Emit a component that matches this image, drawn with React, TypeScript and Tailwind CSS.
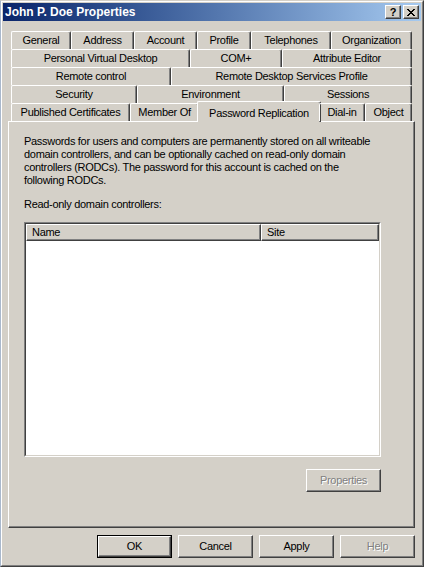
import React from "react";

const font = { fontFamily: '"Liberation Sans", Arial, sans-serif' };

type Tab = { label: string; w: string };

const rows: Tab[][] = [
  [
    { label: "General", w: "w-[60px]" },
    { label: "Address", w: "w-[63px]" },
    { label: "Account", w: "w-[63px]" },
    { label: "Profile", w: "w-[54px]" },
    { label: "Telephones", w: "w-[80px]" },
    { label: "Organization", w: "w-[81px]" },
  ],
  [
    { label: "Personal Virtual Desktop", w: "w-[179px]" },
    { label: "COM+", w: "w-[92px]" },
    { label: "Attribute Editor", w: "w-[130px]" },
  ],
  [
    { label: "Remote control", w: "w-[160px]" },
    { label: "Remote Desktop Services Profile", w: "w-[241px]" },
  ],
  [
    { label: "Security", w: "w-[126px]" },
    { label: "Environment", w: "w-[147px]" },
    { label: "Sessions", w: "w-[128px]" },
  ],
];

function TabItem({ label, w }: Tab) {
  return (
    <div
      className={`${w} h-[18px] shrink-0 flex items-center justify-center border-t border-l border-r border-t-white border-l-white border-r-[#404040] rounded-t-[2px] shadow-[inset_-1px_0_0_#808080] text-[11px] text-black whitespace-nowrap`}
    >
      {label}
    </div>
  );
}

function Button({ children, disabled, isDefault }: { children: React.ReactNode; disabled?: boolean; isDefault?: boolean }) {
  return (
    <div
      className={`w-[75px] h-[23px] flex items-center justify-center text-[11px] bg-[#d4d0c8] ${
        isDefault ? "border border-black" : ""
      }`}
    >
      <div
        className={`w-full h-full flex items-center justify-center border border-t-white border-l-white border-r-[#404040] border-b-[#404040] shadow-[inset_-1px_-1px_0_#808080] ${
          disabled ? "text-[#808080] [text-shadow:1px_1px_0_#ffffff]" : "text-black"
        }`}
      >
        {children}
      </div>
    </div>
  );
}

export default function App() {
  return (
    <div
      style={font}
      className="w-[424px] h-[567px] bg-[#d4d0c8] tracking-[-0.3px] border border-t-[#d4d0c8] border-l-[#a9b8cc] border-r-[#404040] border-b-[#404040] overflow-hidden"
    >
      <div className="w-full h-full border border-t-white border-l-white border-r-[#808080] border-b-[#808080] p-px flex flex-col">
        {/* title bar */}
        <div className="h-[18px] shrink-0 flex items-center justify-between pl-[2px] pr-[2px] bg-gradient-to-r from-[#0a246a] to-[#a6caf0]">
          <span className="text-white font-bold text-[12px] leading-none tracking-normal">John P. Doe Properties</span>
          <div className="flex gap-[2px]">
            <div className="w-[16px] h-[14px] flex items-center justify-center bg-[#d4d0c8] border border-t-white border-l-white border-r-[#404040] border-b-[#404040] shadow-[inset_-1px_-1px_0_#808080] text-[11px] font-bold leading-none">
              ?
            </div>
            <div className="w-[16px] h-[14px] flex items-center justify-center bg-[#d4d0c8] border border-t-white border-l-white border-r-[#404040] border-b-[#404040] shadow-[inset_-1px_-1px_0_#808080]">
              <svg width="8" height="7" viewBox="0 0 8 7">
                <path d="M0 0h2v1h1v1h2v-1h1v-1h2v1h-1v1h-1v1h-1v1h1v1h1v1h1v1h-2v-1h-1v-1h-2v1h-1v1h-2v-1h1v-1h1v-1h1v-1h-1v-1h-1v-1h-1z" fill="black" />
              </svg>
            </div>
          </div>
        </div>

        {/* tabs */}
        <div className="mt-[10px] pl-[5px] flex flex-col">
          <div className="pl-[3px] flex flex-col">
            {rows.map((r, i) => (
              <div key={i} className="flex">
                {r.map((t) => (
                  <TabItem key={t.label} {...t} />
                ))}
              </div>
            ))}
            <div className="flex items-end relative z-10">
              <TabItem label="Published Certificates" w="w-[119px]" />
              <TabItem label="Member Of" w="w-[69px]" />
              <div className="w-[124px] -mx-[2px] h-[21px] -mt-[2px] -mb-px shrink-0 flex items-start pt-[3px] justify-center bg-[#d4d0c8] border-t border-l border-r border-t-white border-l-white border-r-[#404040] rounded-t-[2px] shadow-[inset_-1px_0_0_#808080] text-[11px] whitespace-nowrap">
                Password Replication
              </div>
              <TabItem label="Dial-in" w="w-[46px]" />
              <TabItem label="Object" w="w-[47px]" />
            </div>
          </div>

          {/* panel */}
          <div className="w-[407px] h-[407px] border border-t-white border-l-white border-r-[#404040] border-b-[#404040] shadow-[inset_-1px_-1px_0_#808080] pl-[15px] pt-[13px] flex flex-col text-[11px] text-black">
            <div className="leading-[13px] whitespace-nowrap">
              <div>Passwords for users and computers are permanently stored on all writeable</div>
              <div>domain controllers, and can be optionally cached on read-only domain</div>
              <div>controllers (RODCs). The password for this account is cached on the</div>
              <div>following RODCs.</div>
            </div>
            <div className="mt-[11px] leading-[13px]">Read-only domain controllers:</div>

            <div className="mt-[11px] w-[357px] h-[235px] border border-t-[#808080] border-l-[#808080] border-r-white border-b-white">
              <div className="w-full h-full border border-t-[#404040] border-l-[#404040] border-r-[#d4d0c8] border-b-[#d4d0c8] bg-white flex flex-col">
                <div className="flex h-[17px] shrink-0">
                  <div className="w-[235px] h-full bg-[#d4d0c8] border border-t-white border-l-white border-r-[#404040] border-b-[#404040] shadow-[inset_-1px_-1px_0_#808080] pl-[5px] flex items-center">
                    Name
                  </div>
                  <div className="flex-1 h-full bg-[#d4d0c8] border border-t-white border-l-white border-r-[#404040] border-b-[#404040] shadow-[inset_-1px_-1px_0_#808080] pl-[5px] flex items-center">
                    Site
                  </div>
                </div>
              </div>
            </div>

            <div className="mt-[12px] w-[357px] flex justify-end">
              <Button disabled>Properties</Button>
            </div>
          </div>

          {/* dialog buttons */}
          <div className="mt-[7px] w-[407px] flex justify-end gap-[6px]">
            <Button isDefault>OK</Button>
            <Button>Cancel</Button>
            <Button>Apply</Button>
            <Button disabled>Help</Button>
          </div>
        </div>
      </div>
    </div>
  );
}
